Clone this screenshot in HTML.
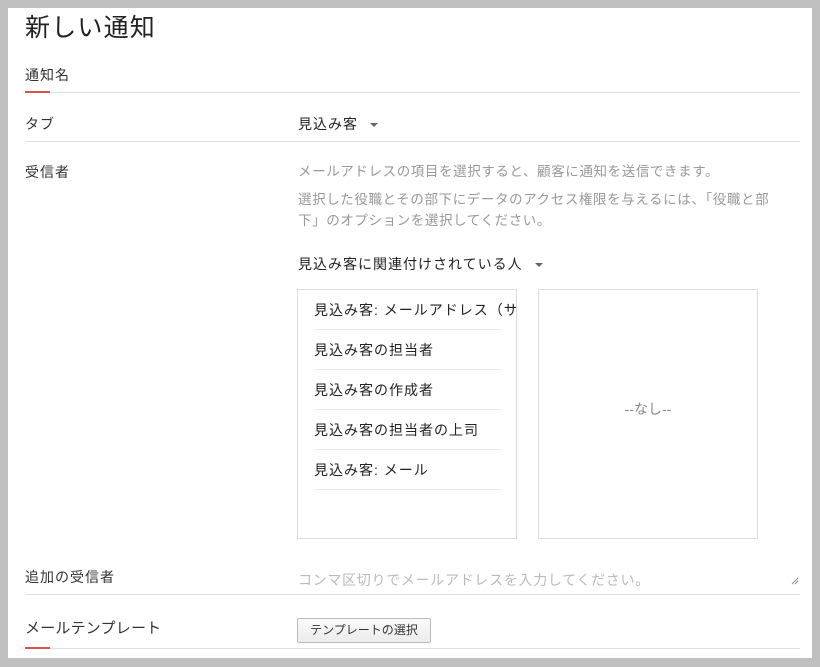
<!DOCTYPE html>
<html><head><meta charset="utf-8"><style>
*{margin:0;padding:0;box-sizing:border-box}
body{width:820px;height:667px;background:#c0c0c0;position:relative;overflow:hidden;font-family:"Liberation Sans","Noto Sans CJK JP",sans-serif;color:#333}
.p{position:absolute;left:8px;top:8px;width:804px;height:650px;background:#fff}
.a{position:absolute;white-space:nowrap}
.l{position:absolute;left:25px;width:775px;height:1px;background:#e0e0e0}
.r{position:absolute;left:25px;width:25px;height:2px;background:#d9534f}
.t{font-size:14px;color:#333;letter-spacing:1px}
.g{font-size:13.5px;color:#999;letter-spacing:0.6px}
.caret{display:inline-block;width:0;height:0;border-left:4px solid transparent;border-right:4px solid transparent;border-top:4px solid #666;vertical-align:middle;margin-left:12px}
.box{position:absolute;border:1px solid #ddd;top:289px;width:220px;height:250px}
.it{position:absolute;left:16px;width:188px;height:40px;border-bottom:1px solid #e8e8e8;font-size:14px;line-height:40px;color:#222;white-space:nowrap;overflow:visible;letter-spacing:1px}
</style></head><body>
<div class="p"></div>
<div class="a" style="left:25px;top:8px;font-size:25px;letter-spacing:1.2px;color:#222">新しい通知</div>
<div class="a t" style="left:25px;top:65px">通知名</div>
<div class="l" style="top:92px"></div><div class="r" style="top:91px"></div>
<div class="a t" style="left:25px;top:114px">タブ</div>
<div class="a t" style="left:298px;top:114px;color:#222">見込み客<span class="caret"></span></div>
<div class="l" style="top:141px"></div>
<div class="a t" style="left:25px;top:162px">受信者</div>
<div class="a g" style="left:298px;top:160px">メールアドレスの項目を選択すると、顧客に通知を送信できます。</div>
<div class="a g" style="left:298px;top:189px;line-height:21px;white-space:normal;width:488px">選択した役職とその部下にデータのアクセス権限を与えるには、「役職と部下」のオプションを選択してください。</div>
<div class="a t" style="left:298px;top:254px;color:#222">見込み客に関連付けされている人<span class="caret"></span></div>
<div class="box" style="left:297px;overflow:hidden">
<div class="it" style="top:0">見込み客: メールアドレス（サ</div>
<div class="it" style="top:40px">見込み客の担当者</div>
<div class="it" style="top:80px">見込み客の作成者</div>
<div class="it" style="top:120px">見込み客の担当者の上司</div>
<div class="it" style="top:160px">見込み客: メール</div>
</div>
<div class="box" style="left:538px"><div class="a" style="left:0;width:218px;text-align:center;top:109px;font-size:14px;color:#888">--なし--</div></div>
<div class="a t" style="left:25px;top:567px">追加の受信者</div>
<div class="a g" style="left:298px;top:570px;color:#bbb;font-size:14px;letter-spacing:0.7px">コンマ区切りでメールアドレスを入力してください。</div>
<svg class="a" style="left:791px;top:577px" width="8" height="8"><path d="M1 7L7 1M4 7L7 4" stroke="#888" stroke-width="1"/></svg>
<div class="l" style="top:594px"></div>
<div class="a t" style="left:25px;top:617px;font-size:15px;letter-spacing:0.2px">メールテンプレート</div>
<div class="a" style="left:297px;top:618px;width:134px;height:25px;border:1px solid #bbb;border-radius:2px;background:linear-gradient(#fafafa,#ececec);font-size:12px;line-height:23px;text-align:center;color:#333">テンプレートの選択</div>
<div class="l" style="top:648px"></div><div class="r" style="top:647px"></div>
</body></html>
